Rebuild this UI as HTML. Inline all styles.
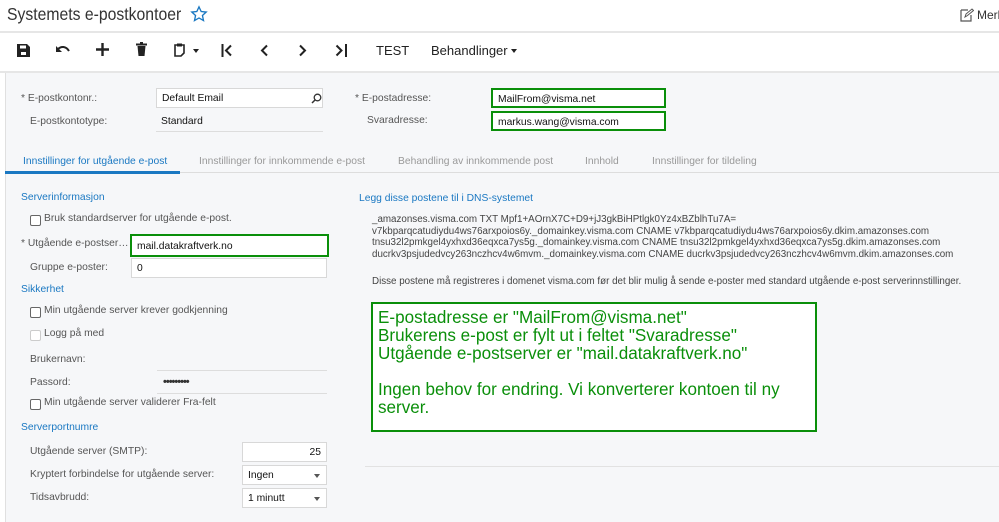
<!DOCTYPE html>
<html><head><meta charset="utf-8"><style>
*{box-sizing:border-box;margin:0;padding:0}
body{width:999px;height:522px;overflow:hidden;background:#fff;font-family:"Liberation Sans",Arial,sans-serif;font-size:10.3px;color:#333;position:relative}
.a{position:absolute;white-space:nowrap}
.lbl{color:#555;font-size:10.3px}
.inp{position:absolute;background:#fff;border:1px solid #d8d8d8;height:20px;padding:4px 5px 2px;font-size:10.3px;color:#111;white-space:nowrap}
.grn{border:2px solid #0a8f0a;padding:4px 5px 2px}
.sec{color:#1a78c2;font-size:10.3px}
.cb{position:absolute;width:11px;height:11px;border:1px solid #666;border-radius:2px;background:#fff}
.arr{position:absolute;right:6px;top:8px;border-left:3px solid transparent;border-right:3px solid transparent;border-top:4px solid #555}
</style></head><body>
<div class="a" style="left:7px;top:4px;font-size:17.5px;color:#333;transform:scaleX(0.9);transform-origin:left">Systemets e-postkontoer</div>
<svg class="a" style="left:190px;top:5px" width="18" height="18" viewBox="0 0 24 24"><path d="M12 2.5l2.9 6.2 6.7.7-5 4.6 1.4 6.7L12 17.3l-6 3.4 1.4-6.7-5-4.6 6.7-.7z" fill="none" stroke="#1a78c2" stroke-width="1.8"/></svg>
<svg class="a" style="left:960px;top:8px" width="14" height="14" viewBox="0 0 14 14"><path d="M1 2h7M1 2v11h10V7" fill="none" stroke="#555" stroke-width="1.2"/><path d="M5 9l1-3 6-5 1.5 1.5-6 5z" fill="none" stroke="#555" stroke-width="1"/></svg>
<div class="a" style="left:977px;top:8px;font-size:12px;color:#333">Merl</div>
<div class="a" style="left:0;top:31px;width:999px;height:2px;background:#e6e6e6"></div>
<svg class="a" style="left:17px;top:44px" width="13" height="13" viewBox="0 0 13 13"><path d="M0 0h10l3 3v10H0z" fill="#222"/><rect x="3" y="1.5" width="6" height="3" fill="#fff"/><rect x="4" y="8" width="5" height="3" fill="#fff"/></svg>
<svg class="a" style="left:56px;top:45px" width="14" height="10" viewBox="0 0 14 10"><path d="M2 4c3-3 8-3 11 2" fill="none" stroke="#222" stroke-width="2"/><path d="M0 1v6h6z" fill="#222"/></svg>
<svg class="a" style="left:96px;top:43px" width="13" height="13"><path d="M6.5 0v13M0 6.5h13" stroke="#222" stroke-width="2.4"/></svg>
<svg class="a" style="left:136px;top:42px" width="11" height="14"><rect x="0" y="1.5" width="11" height="2" fill="#222"/><rect x="4" y="0" width="3" height="2" fill="#222"/><path d="M1.5 4h8l-1 10h-6z" fill="#222"/></svg>
<svg class="a" style="left:174px;top:43px" width="11" height="14"><path d="M1 2h9v8l-3 3H1z" fill="none" stroke="#222" stroke-width="1.6"/><rect x="3" y="0.5" width="5" height="3" fill="#222"/></svg>
<div class="a" style="left:193px;top:49px;border-left:3px solid transparent;border-right:3px solid transparent;border-top:4px solid #222"></div>
<svg class="a" style="left:221px;top:44px" width="12" height="13"><path d="M1.5 0v13" stroke="#222" stroke-width="2"/><path d="M10 1.5L5 6.5l5 5" fill="none" stroke="#222" stroke-width="2"/></svg>
<svg class="a" style="left:259px;top:44px" width="10" height="13"><path d="M8 1.5L3 6.5l5 5" fill="none" stroke="#222" stroke-width="2"/></svg>
<svg class="a" style="left:298px;top:44px" width="10" height="13"><path d="M2 1.5l5 5-5 5" fill="none" stroke="#222" stroke-width="2"/></svg>
<svg class="a" style="left:335px;top:44px" width="13" height="13"><path d="M1.5 1.5l5 5-5 5" fill="none" stroke="#222" stroke-width="2"/><path d="M11 0v13" stroke="#222" stroke-width="2"/></svg>
<div class="a" style="left:376px;top:43px;font-size:13px;color:#222">TEST</div>
<div class="a" style="left:431px;top:43px;font-size:13px;color:#222">Behandlinger</div>
<div class="a" style="left:511px;top:49px;border-left:3px solid transparent;border-right:3px solid transparent;border-top:4px solid #222"></div>
<div class="a" style="left:0;top:71px;width:999px;height:2px;background:#e6e6e6"></div>
<div class="a" style="left:5px;top:73px;width:994px;height:449px;background:#f6f7f9;border-left:1px solid #e0e0e0"></div>
<div class="a lbl" style="left:21px;top:93px">* E-postkontonr.:</div>
<div class="inp" style="left:156px;top:88px;width:167px">Default Email</div>
<svg class="a" style="left:311px;top:93px" width="11" height="11"><circle cx="6.5" cy="4.5" r="3.3" fill="none" stroke="#333" stroke-width="1.3"/><path d="M4 7L1 10" stroke="#333" stroke-width="1.5"/></svg>
<div class="a lbl" style="left:30px;top:116px">E-postkontotype:</div>
<div class="a" style="left:161px;top:116px;color:#111">Standard</div>
<div class="a" style="left:156px;top:131px;width:167px;height:1px;background:#ddd"></div>
<div class="a lbl" style="left:355px;top:93px">* E-postadresse:</div>
<div class="inp grn" style="left:491px;top:88px;width:175px">MailFrom@visma.net</div>
<div class="a lbl" style="left:367px;top:115px">Svaradresse:</div>
<div class="inp grn" style="left:491px;top:111px;width:175px">markus.wang@visma.com</div>
<div class="a" style="left:5px;top:172px;width:994px;height:1px;background:#ddd"></div>
<div class="a" style="left:5px;top:171px;width:175px;height:3px;background:#1a78c2"></div>
<div class="a" style="left:23px;top:156px;color:#1a78c2">Innstillinger for utgående e-post</div>
<div class="a" style="left:199px;top:156px;color:#999">Innstillinger for innkommende e-post</div>
<div class="a" style="left:398px;top:156px;color:#999">Behandling av innkommende post</div>
<div class="a" style="left:585px;top:156px;color:#999">Innhold</div>
<div class="a" style="left:652px;top:156px;color:#999">Innstillinger for tildeling</div>
<div class="a sec" style="left:21px;top:192px">Serverinformasjon</div>
<div class="cb" style="left:30px;top:215px"></div>
<div class="a lbl" style="left:44px;top:213px">Bruk standardserver for utgående e-post.</div>
<div class="a lbl" style="left:21px;top:238px">* Utgående e-postser…</div>
<div class="inp grn" style="left:130px;top:234px;width:199px;height:23px;padding-top:5px">mail.datakraftverk.no</div>
<div class="a lbl" style="left:30px;top:262px">Gruppe e-poster:</div>
<div class="inp" style="left:131px;top:258px;width:196px">0</div>
<div class="a sec" style="left:21px;top:284px">Sikkerhet</div>
<div class="cb" style="left:30px;top:307px"></div>
<div class="a lbl" style="left:44px;top:305px">Min utgående server krever godkjenning</div>
<div class="cb" style="left:30px;top:330px;border-color:#ccc"></div>
<div class="a lbl" style="left:44px;top:328px">Logg på med</div>
<div class="a lbl" style="left:30px;top:354px">Brukernavn:</div>
<div class="a" style="left:157px;top:370px;width:170px;height:1px;background:#ddd"></div>
<div class="a lbl" style="left:30px;top:377px">Passord:</div>
<div class="a" style="left:163px;top:376px;font-size:11px;font-weight:bold;letter-spacing:-1px">•••••••••</div>
<div class="a" style="left:157px;top:393px;width:170px;height:1px;background:#ddd"></div>
<div class="cb" style="left:30px;top:399px"></div>
<div class="a lbl" style="left:44px;top:397px">Min utgående server validerer Fra-felt</div>
<div class="a sec" style="left:21px;top:422px">Serverportnumre</div>
<div class="a lbl" style="left:30px;top:446px">Utgående server (SMTP):</div>
<div class="inp" style="left:242px;top:442px;width:85px;text-align:right">25</div>
<div class="a lbl" style="left:30px;top:469px">Kryptert forbindelse for utgående server:</div>
<div class="inp" style="left:242px;top:465px;width:85px">Ingen<div class="arr"></div></div>
<div class="a lbl" style="left:30px;top:492px">Tidsavbrudd:</div>
<div class="inp" style="left:242px;top:488px;width:85px">1 minutt<div class="arr"></div></div>
<div class="a sec" style="left:359px;top:193px">Legg disse postene til i DNS-systemet</div>
<div class="a" style="left:372px;top:214px;font-size:9.8px;color:#444;line-height:11.5px">_amazonses.visma.com TXT Mpf1+AOrnX7C+D9+jJ3gkBiHPtlgk0Yz4xBZblhTu7A=<br>v7kbparqcatudiydu4ws76arxpoios6y._domainkey.visma.com CNAME v7kbparqcatudiydu4ws76arxpoios6y.dkim.amazonses.com<br>tnsu32l2pmkgel4yxhxd36eqxca7ys5g._domainkey.visma.com CNAME tnsu32l2pmkgel4yxhxd36eqxca7ys5g.dkim.amazonses.com<br>ducrkv3psjudedvcy263nczhcv4w6mvm._domainkey.visma.com CNAME ducrkv3psjudedvcy263nczhcv4w6mvm.dkim.amazonses.com</div>
<div class="a" style="left:372px;top:276px;font-size:9.8px;color:#444">Disse postene må registreres i domenet visma.com før det blir mulig å sende e-poster med standard utgående e-post serverinnstillinger.</div>
<div class="a" style="left:371px;top:302px;width:446px;height:130px;background:#fff;border:2px solid #0a8f0a;padding:5px 5px;color:#0a8f0a;font-size:17.1px;line-height:18px;white-space:normal">E-postadresse er "MailFrom@visma.net"<br>Brukerens e-post er fylt ut i feltet "Svaradresse"<br>Utgående e-postserver er "mail.datakraftverk.no"<br><br>Ingen behov for endring. Vi konverterer kontoen til ny server.</div>
<div class="a" style="left:365px;top:466px;width:634px;height:1px;background:#e2e2e2"></div>
</body></html>
